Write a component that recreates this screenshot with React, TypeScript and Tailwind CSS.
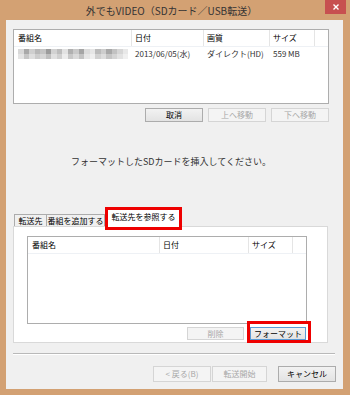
import React from 'react';

const mosaicTop = ['#d8d8d8', '#a9a9a9', '#cfcfcf', '#b8b8b8', '#c4c4c4', '#9c9c9c', '#d2d2d2', '#bdbdbd', '#e2e2e2', '#b0b0b0', '#c9c9c9', '#a5a5a5', '#dcdcdc', '#e6e6e6', '#bbbbbb', '#cdcdcd', '#a8a8a8', '#c2c2c2', '#d6d6d6', '#e8e8e8'];
const mosaicBottom = ['#e4e4e4', '#c6c6c6', '#dedede', '#cccccc', '#d6d6d6', '#bfbfbf', '#e0e0e0', '#d0d0d0', '#ececec', '#c8c8c8', '#dadada', '#c3c3c3', '#e6e6e6', '#efefef', '#d1d1d1', '#dddddd', '#c5c5c5', '#d4d4d4', '#e2e2e2', '#f0f0f0'];

function Btn({ label, disabled, focused, className = '' }: { label: string; disabled?: boolean; focused?: boolean; className?: string }) {
  return (
    <div
      className={`flex items-center justify-center text-[8px] leading-none ${
        disabled
          ? 'border border-[#d5d5d5] bg-[#f4f4f4] text-[#a8a8a8]'
          : focused
          ? 'border border-[#5b9bd5] bg-gradient-to-b from-[#f2f2f2] to-[#e3e3e3] text-black'
          : 'border border-[#acacac] bg-gradient-to-b from-[#f2f2f2] to-[#e3e3e3] text-black'
      } ${className}`}
    >
      {label}
    </div>
  );
}

export default function App() {
  return (
    <div className="w-[350px] h-[395px] bg-[#d3a173] flex flex-col font-['Noto_Sans_CJK_JP',sans-serif]">
      {/* Title bar */}
      <div className="h-[20px] relative flex items-center justify-center pr-[7px] text-[10px] text-[#333]">
        外でもVIDEO（SDカード／USB転送）
        <div className="absolute right-[4px] top-0 w-[21px] h-[14px] bg-[#c75050] flex items-center justify-center">
          <svg width="6" height="6" viewBox="0 0 6 6">
            <path d="M0.5 0.5 L5.5 5.5 M5.5 0.5 L0.5 5.5" stroke="white" strokeWidth="1.4" />
          </svg>
        </div>
      </div>

      {/* Client area */}
      <div className="ml-[6px] mr-[7px] mb-[6px] flex-1 bg-[#f0f0f0] flex flex-col pl-[7px] pr-[14px] pt-[9px]">
        {/* Transfer list */}
        <div className="h-[75px] bg-white border border-[#adadad] flex flex-col text-[8px] text-black">
          <div className="h-[17px] flex items-center border-b border-[#eef1f5]">
            <div className="w-[118px] h-full flex items-center pl-[4px] border-r border-[#e5e5e5]">番組名</div>
            <div className="w-[72px] h-full flex items-center pl-[3px] border-r border-[#e5e5e5]">日付</div>
            <div className="w-[66px] h-full flex items-center pl-[3px] border-r border-[#e5e5e5]">画質</div>
            <div className="w-[45px] h-full flex items-center pl-[3px] border-r border-[#e5e5e5]">サイズ</div>
          </div>
          <div className="h-[12px] mt-[1px] flex items-center">
            <div className="w-[118px] pl-[4px] flex flex-col">
              <div className="flex">
                {mosaicTop.map((c, i) => (
                  <div key={i} className="w-[5.5px] h-[5px]" style={{ background: c }} />
                ))}
              </div>
              <div className="flex">
                {mosaicBottom.map((c, i) => (
                  <div key={i} className="w-[5.5px] h-[5px]" style={{ background: c }} />
                ))}
              </div>
            </div>
            <div className="w-[72px] pl-[3px] text-[#333]">2013/06/05(水)</div>
            <div className="w-[66px] pl-[3px] text-[#333]">ダイレクト(HD)</div>
            <div className="w-[45px] pl-[3px] text-[#333]">559 MB</div>
          </div>
        </div>

        {/* List buttons */}
        <div className="mt-[4px] flex justify-end gap-[5px]">
          <Btn label="取消" className="w-[58px] h-[14px]" />
          <Btn label="上へ移動" disabled className="w-[58px] h-[14px]" />
          <Btn label="下へ移動" disabled className="w-[58px] h-[14px]" />
        </div>

        {/* Message */}
        <div className="h-[85px] pt-[33px] text-center text-[9px] leading-[14px] text-[#333]">
          フォーマットしたSDカードを挿入してください。
        </div>

        {/* Tabs */}
        <div className="h-[19px] flex items-end pl-[1px] text-[8px] text-black">
          <div className="w-[33px] h-[12px] border border-b-0 border-[#acacac] bg-[#f0f0f0] flex items-center justify-center leading-none">転送先</div>
          <div className="w-[58px] h-[12px] border border-b-0 border-l-0 border-[#acacac] bg-[#f0f0f0] flex items-center justify-center leading-none whitespace-nowrap">番組を追加する</div>
          <div className="w-[77px] h-[23px] -mb-[4px] relative z-10 border-[3px] border-[#ee0000] bg-white flex items-center justify-center leading-none pb-[3px]">
            転送先を参照する
          </div>
        </div>

        {/* Tab panel */}
        <div className="h-[117px] w-[315px] bg-white border border-[#d9d9d9] flex flex-col pl-[13px] pr-[20px] pt-[9px] text-[8px] text-black">
          <div className="h-[88px] border border-[#adadad] flex flex-col">
            <div className="h-[17px] flex items-center border-b border-[#eef1f5]">
              <div className="w-[132px] h-full flex items-center pl-[4px] border-r border-[#e5e5e5]">番組名</div>
              <div className="w-[89px] h-full flex items-center pl-[3px] border-r border-[#e5e5e5]">日付</div>
              <div className="w-[44px] h-full flex items-center pl-[3px] border-r border-[#e5e5e5]">サイズ</div>
            </div>
          </div>
          <div className="mt-[3px] flex justify-end gap-[6px] pr-[1px]">
            <Btn label="削除" disabled className="w-[57px] h-[13px]" />
            <div className="relative">
              <Btn label="フォーマット" focused className="w-[56px] h-[13px]" />
              <div className="absolute left-[-3px] right-[-5px] top-[-6px] bottom-[-3px] border-[3px] border-[#ee0000]" />
            </div>
          </div>
        </div>

        {/* Separator */}
        <div className="mt-[10px] mr-[-6px] border-t border-b border-t-[#b9b9b9] border-b-white" />

        {/* Wizard buttons */}
        <div className="mt-[11px] mr-[-7px] flex justify-end">
          <Btn label="< 戻る(B)" disabled className="w-[58px] h-[16px]" />
          <Btn label="転送開始" disabled className="w-[55px] h-[16px] ml-[1px]" />
          <Btn label="キャンセル" className="w-[58px] h-[16px] ml-[11px]" />
        </div>
      </div>
    </div>
  );
}
